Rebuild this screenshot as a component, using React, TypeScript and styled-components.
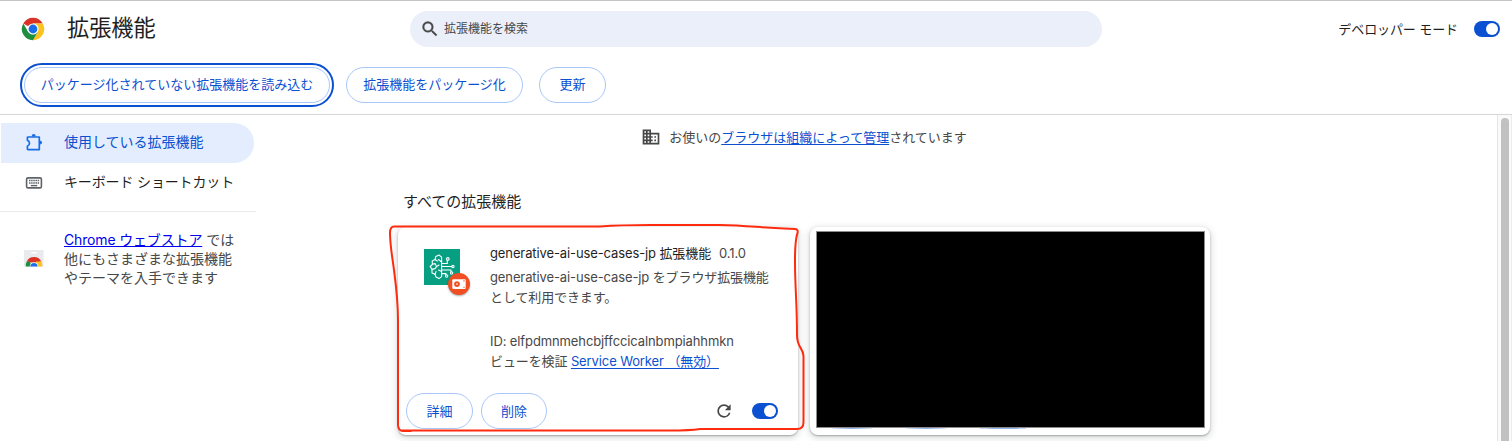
import React from "react";
import styled, { createGlobalStyle, css } from "styled-components";

const Global = createGlobalStyle`
  * { box-sizing: border-box; }
  html, body { margin: 0; height: 100%; overflow: hidden; }
  body {
    background: #fff;
    color: #1f1f1f;
    font: 13px/20px Inter, "Noto Sans CJK JP", sans-serif;
  }
`;

const Page = styled.div`
  position: relative;
  display: flex;
  flex-direction: column;
  height: 441px;
  width: 1512px;
  overflow: hidden;
  border-top: 1px solid #c4c4c4;
`;

const Header = styled.header`
  display: flex;
  align-items: center;
  height: 56px;
  padding: 0 12px 0 21px;
`;

const Title = styled.h1`
  margin: 0 0 0 22px;
  width: 343px;
  font-size: 22.2px;
  font-weight: 400;
  line-height: 30px;
  padding-bottom: 2px;
`;

const SearchBox = styled.div`
  display: flex;
  align-items: center;
  gap: 4px;
  width: 692px;
  height: 36px;
  padding-left: 10px;
  border-radius: 18px;
  background: #ebeff9;
  color: #474747;
  font-size: 12px;
`;

const DevMode = styled.div`
  display: flex;
  align-items: center;
  gap: 16px;
  margin-left: auto;
  letter-spacing: -0.1px;
`;

const Knob = styled.span`
  width: 12px;
  height: 12px;
  border-radius: 50%;
  background: #fff;
`;

const Track = styled.span`
  display: flex;
  align-items: center;
  justify-content: flex-end;
  width: 26px;
  height: 16px;
  padding-right: 2px;
  border-radius: 8px;
  background: #0b50d0;
`;

const Toolbar = styled.div`
  display: flex;
  align-items: center;
  gap: 16px;
  height: 58px;
  padding: 0 24px 2px;
  border-bottom: 1px solid #d6d6d6;
`;

const Button = styled.button<{ $width: number; $focused?: boolean }>`
  width: ${(p) => p.$width}px;
  height: 36px;
  padding: 0 0 1px;
  border: 1px solid #a8c7fa;
  border-radius: 18px;
  background: #fff;
  color: #0b50d0;
  font: 400 13px/20px Inter, "Noto Sans CJK JP", sans-serif;
  ${(p) =>
    p.$focused &&
    css`
      outline: 2px solid #0b50d0;
      outline-offset: 2px;
    `}
`;

const Body = styled.div`
  display: flex;
  flex: 1;
  min-height: 0;
`;

const Sidebar = styled.nav`
  width: 256px;
  padding-top: 8px;
`;

const NavItem = styled.a<{ $selected?: boolean }>`
  display: flex;
  align-items: center;
  gap: 20px;
  width: 253px;
  height: 40px;
  margin-left: 1px;
  padding-left: 23px;
  border-radius: 0 20px 20px 0;
  font-size: 14px;
  white-space: nowrap;
  color: ${(p) => (p.$selected ? "#0b50d0" : "#1f1f1f")};
  background: ${(p) => (p.$selected ? "#e3edfe" : "transparent")};
`;

const NavLabel = styled.span<{ $tight?: boolean }>`
  padding-bottom: 2px;
  letter-spacing: ${(p) => (p.$tight ? "-0.15px" : "0")};
`;

const Promo = styled.div`
  display: flex;
  align-items: center;
  gap: 20px;
  margin-top: 8px;
  padding: 18px 0 0 24px;
  border-top: 1px solid #e8eaed;
  font-size: 14px;
  line-height: 19px;
  color: #474747;
  white-space: nowrap;
  a { color: #0000ee; text-decoration: underline; letter-spacing: -0.16px; }
`;

const Main = styled.main`
  flex: 1;
  padding-left: 142px;
`;

const Managed = styled.div`
  display: flex;
  align-items: center;
  justify-content: center;
  gap: 8px;
  width: 812px;
  height: 43px;
  color: #474747;
  a { color: #0b50d0; text-decoration: underline; text-underline-offset: 2px; }
`;

const SectionTitle = styled.h2`
  margin: 32px 0 0 5px;
  font-size: 15px;
  font-weight: 400;
  line-height: 24px;
  height: 37px;
`;

const Cards = styled.div`
  display: flex;
  gap: 12px;
`;

const Card = styled.section`
  display: flex;
  flex-direction: column;
  width: 400px;
  height: 208px;
  border-radius: 8px;
  background: #fff;
  box-shadow: 0 1px 2px rgba(60, 64, 67, 0.4), 0 2px 6px 2px rgba(60, 64, 67, 0.15);
`;

const CardInfo = styled.div`
  display: flex;
  gap: 30px;
  height: 166px;
  padding: 16px 20px 0 26px;
  color: #474747;
  white-space: nowrap;
  letter-spacing: -0.11px;
`;

const IconSlot = styled.div`
  position: relative;
  width: 36px;
  height: 36px;
  margin-top: 6px;
`;

const Badge = styled.span`
  position: absolute;
  left: 24px;
  top: 24px;
  display: flex;
  width: 22px;
  height: 22px;
  border-radius: 50%;
  background: #f04f24;
  box-shadow: 0 1px 2px rgba(0, 0, 0, 0.35);
`;

const Name = styled.div`
  display: flex;
  gap: 8px;
  height: 24px;
  color: #474747;
  strong { font-weight: 400; color: #1f1f1f; }
`;

const Description = styled.div`
  height: 64px;
  line-height: 20px;
`;

const Inspect = styled.div`
  a { color: #0b50d0; text-decoration: underline; text-underline-offset: 2px; }
`;

const CardActions = styled.div`
  display: flex;
  align-items: center;
  gap: 8px;
  height: 36px;
  padding: 0 20px 0 8px;
`;

const CardControls = styled.div`
  display: flex;
  align-items: center;
  gap: 18px;
  margin-left: auto;
`;

const Redacted = styled.div`
  width: 389px;
  height: 197px;
  margin: 4px 0 0 5.5px;
  border: 1px solid #8c8c8c;
  background: #000;
`;

const HiddenButtons = styled.div`
  display: flex;
  gap: 32px;
  padding-left: 21px;
`;

const HiddenEdge = styled.span<{ $width: number }>`
  width: ${(p) => p.$width}px;
  height: 1px;
  border-radius: 50%;
  background: #8fb0ee;
`;

const Scrollbar = styled.div`
  width: 15px;
  padding: 3px 0 0 3px;
  border-left: 1px solid #e4e4e4;
  border-right: 1px solid #ededed;
  background: #fafafa;
`;

const Thumb = styled.div`
  width: 8px;
  height: 340px;
  border-radius: 4px;
  background: #c1c1c1;
`;

const Marker = styled.svg`
  position: absolute;
  left: 0;
  top: -1px;
  pointer-events: none;
`;

const Toggle = () => (
  <Track>
    <Knob />
  </Track>
);

const ChromeLogo = () => (
  <svg width="24" height="24" viewBox="0 0 24 24">
    <path d="M12 12 2.3 6.4A11.2 11.2 0 0 1 21.7 6.4L12 6.4Z" fill="#db3226" />
    <path d="M12 6.4H21.7A11.2 11.2 0 0 1 12 23.2L16.85 14.8Z" fill="#fcc31e" />
    <path d="M2.3 6.4 7.15 14.8 12 17.6 16.85 14.8 12 23.2A11.2 11.2 0 0 1 2.3 6.4Z" fill="#1e8e3e" />
    <circle cx="12" cy="12" r="5.6" fill="#fff" />
    <circle cx="12" cy="12" r="4.4" fill="#1a6de8" />
  </svg>
);

const SearchIcon = () => (
  <svg width="20" height="20" viewBox="0 0 24 24" fill="#474747" stroke="#474747" strokeWidth=".4">
    <path d="M15.5 14h-.79l-.28-.27A6.471 6.471 0 0 0 16 9.5 6.5 6.5 0 1 0 9.5 16c1.61 0 3.09-.59 4.23-1.57l.27.28v.79l5 4.99L20.49 19l-4.99-5zm-6 0C7.01 14 5 11.99 5 9.5S7.01 5 9.5 5 14 7.01 14 9.5 11.99 14 9.5 14z" />
  </svg>
);

const PuzzleIcon = () => (
  <svg width="20" height="20" viewBox="0 0 20 20">
    <path d="M4 4H15.300V16.600H4Q3.400 16.600 3.400 16V13.300C6.200 11.800 6.200 8.800 3.400 7.300V4.600Q3.400 4 4 4Z" fill="none" stroke="#1a6de8" strokeWidth="1.7" strokeLinejoin="round" />
    <path d="M7.700 3.600V3a2 2 0 0 1 4 0V3.600ZM15.900 7.800h.4a1.700 1.700 0 0 1 0 3.600h-.4Z" fill="#1a6de8" />
  </svg>
);

const KeyboardIcon = () => (
  <svg width="20" height="20" viewBox="0 0 20 20">
    <rect x="2.6" y="4.9" width="14.8" height="10" rx="1.4" fill="none" stroke="#5f6368" strokeWidth="1.6" />
    <path d="M5 7.6H15.2M5 10H15.2" stroke="#5f6368" strokeWidth="1.5" strokeDasharray="1.5 .65" />
    <path d="M6.8 12.6H13.2" stroke="#5f6368" strokeWidth="1.4" />
  </svg>
);

const StoreIcon = () => (
  <svg width="20" height="20" viewBox="0 0 20 20">
    <path d="M0 1H19.6V17.600H0Z" fill="#e8eaed" />
    <rect x="7" y="3" width="6" height="1.6" rx=".8" fill="#fff" />
    <path d="M2.700 12.400A8.300 8.300 0 0 1 17.300 12.400L10 14Z" fill="#db3226" />
    <path d="M2.700 12.400A8.300 8.300 0 0 0 1.800 17.600H8L6 13Z" fill="#1e8e3e" />
    <path d="M12 12.400H17.300A8.300 8.300 0 0 1 18.200 17.600H12Z" fill="#fcc31e" />
    <path d="M5.700 17.600a4.300 4.300 0 0 1 8.600 0Z" fill="#fff" />
    <path d="M6.400 17.600a3.600 3.600 0 0 1 7.200 0Z" fill="#1a6de8" />
  </svg>
);

const BusinessIcon = () => (
  <svg width="20" height="20" viewBox="0 0 24 24" fill="#474747">
    <path d="M12 7V3H2v18h20V7H12zM6 19H4v-2h2v2zm0-4H4v-2h2v2zm0-4H4V9h2v2zm0-4H4V5h2v2zm4 12H8v-2h2v2zm0-4H8v-2h2v2zm0-4H8V9h2v2zm0-4H8V5h2v2zm10 12h-8v-2h2v-2h-2v-2h2v-2h-2V9h8v10zm-2-8h-2v2h2v-2zm0 4h-2v2h2v-2z" />
  </svg>
);

const ReloadIcon = () => (
  <svg width="20" height="20" viewBox="0 0 24 24" fill="#474747">
    <path d="M17.65 6.35A7.958 7.958 0 0 0 12 4a8 8 0 1 0 7.73 10h-2.08A5.99 5.99 0 0 1 12 18a6 6 0 1 1 0-12c1.66 0 3.14.69 4.22 1.78L13 11h7V4l-2.35 2.35z" />
  </svg>
);

const BrainIcon = () => (
  <svg width="36" height="36" viewBox="0 0 36 36" fill="none" stroke="#fff" strokeWidth="1.1" strokeLinejoin="round" strokeLinecap="round">
    <rect width="36" height="36" fill="#069f82" stroke="none" />
    <path d="M17.6 8.2 15 6 11.8 7.6 11 10.6 8.2 12 8.4 15.3 6.2 17.5 8 20.4 8 24 11 25.3 12 28 15 29.6 17.6 27.6V8.200Z" />
    <path d="M11 10.6 13.4 12M8.4 15.3 11 14.6 12.600 17.6 15 16M8 20.4 11 19.6 12.600 17.6M11 25.3 12 22.6M14.500 21 17.6 22.4M14.500 10.500 17.6 13" />
    <path d="M17.6 14.5H23.3V11.3M17.6 17.500H28M17.6 21H27V23M17.6 24.6H22V26" />
    <circle cx="23.8" cy="9.9" r="1.3" />
    <circle cx="28.9" cy="17.500" r="1.2" />
    <circle cx="27.6" cy="24" r="1.2" />
    <circle cx="22.6" cy="27" r="1.2" />
  </svg>
);

const UnpackedIcon = () => (
  <svg width="22" height="22" viewBox="0 0 22 22">
    <rect x="4.3" y="6.2" width="13.4" height="9.8" rx="1" fill="#fff" />
    <circle cx="9" cy="11.1" r="2.900" fill="#f04f24" />
    <circle cx="9" cy="11.1" r=".8" fill="#fff" />
    <path d="M15.400 7.900h1.200M15.400 14.300h1.200" stroke="#f04f24" strokeWidth="1.1" />
  </svg>
);

export default function App() {
  return (
    <Page>
      <Global />
      <Header>
        <ChromeLogo />
        <Title>拡張機能</Title>
        <SearchBox>
          <SearchIcon />
          拡張機能を検索
        </SearchBox>
        <DevMode>
          デベロッパー モード
          <Toggle />
        </DevMode>
      </Header>
      <Toolbar>
        <Button $width={306} $focused>パッケージ化されていない拡張機能を読み込む</Button>
        <Button $width={177}>拡張機能をパッケージ化</Button>
        <Button $width={67}>更新</Button>
      </Toolbar>
      <Body>
        <Sidebar>
          <NavItem $selected>
            <PuzzleIcon />
            <NavLabel>使用している拡張機能</NavLabel>
          </NavItem>
          <NavItem>
            <KeyboardIcon />
            <NavLabel $tight>キーボード ショートカット</NavLabel>
          </NavItem>
          <Promo>
            <StoreIcon />
            <div>
              <a>Chrome ウェブストア</a> では
              <br />
              他にもさまざまな拡張機能
              <br />
              やテーマを入手できます
            </div>
          </Promo>
        </Sidebar>
        <Main>
          <Managed>
            <BusinessIcon />
            <span>
              お使いの<a>ブラウザは組織によって管理</a>されています
            </span>
          </Managed>
          <SectionTitle>すべての拡張機能</SectionTitle>
          <Cards>
            <Card>
              <CardInfo>
                <IconSlot>
                  <BrainIcon />
                  <Badge>
                    <UnpackedIcon />
                  </Badge>
                </IconSlot>
                <div>
                  <Name>
                    <strong>generative-ai-use-cases-jp 拡張機能</strong>
                    <span>0.1.0</span>
                  </Name>
                  <Description>
                    generative-ai-use-case-jp をブラウザ拡張機能
                    <br />
                    として利用できます。
                  </Description>
                  <div>ID: elfpdmnmehcbjffccicalnbmpiahhmkn</div>
                  <Inspect>
                    ビューを検証 <a>Service Worker （無効）</a>
                  </Inspect>
                </div>
              </CardInfo>
              <CardActions>
                <Button $width={67}>詳細</Button>
                <Button $width={66}>削除</Button>
                <CardControls>
                  <ReloadIcon />
                  <Toggle />
                </CardControls>
              </CardActions>
            </Card>
            <Card>
              <Redacted />
              <HiddenButtons>
                <HiddenEdge $width={42} />
                <HiddenEdge $width={42} />
                <HiddenEdge $width={48} />
              </HiddenButtons>
            </Card>
          </Cards>
        </Main>
        <Scrollbar>
          <Thumb />
        </Scrollbar>
      </Body>
      <Marker width="1512" height="441" viewBox="0 0 1512 441">
        <path
          d="M411 431H403Q398.300 431 398 425V320C398 300 396 285 394 270C392 255 390 245 390 233Q390 226.500 394 226.500L600 226.500Q620 225 650 225H720C750 225.500 760 228 795 229Q798.500 229.500 797.500 233C796 238 795 240 795 260C795 290 797 300 797 335C797 348 803 347 803.500 356V422Q803.500 429 797 429H700Q690 430.500 670 430.500H402"
          fill="none"
          stroke="#ff2b0f"
          strokeWidth="2"
          strokeLinecap="round"
          strokeLinejoin="round"
        />
      </Marker>
    </Page>
  );
}
